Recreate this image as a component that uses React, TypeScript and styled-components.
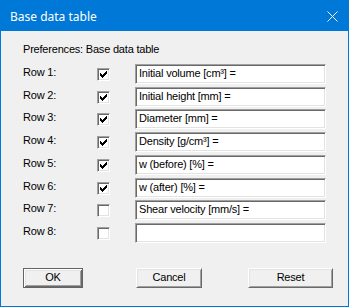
import React from 'react';
import styled, { createGlobalStyle } from 'styled-components';

const GlobalStyle = createGlobalStyle`
  html, body {
    margin: 0;
    padding: 0;
    background: #f0f0f0;
  }
`;

const Window = styled.div`
  box-sizing: border-box;
  width: 349px;
  height: 307px;
  border: 1px solid #0078d7;
  background: #f0f0f0;
  display: flex;
  flex-direction: column;
  font-family: "Liberation Sans", Arial, sans-serif;
  font-size: 11px;
  letter-spacing: -0.2px;
  color: #000;
`;

const TitleBar = styled.div`
  height: 30px;
  background: #0078d7;
  display: flex;
  align-items: center;
  padding-left: 9px;
  padding-right: 10px;
`;

const Title = styled.span`
  font-family: "Noto Sans", sans-serif;
  font-size: 12px;
  letter-spacing: 0;
  color: #fff;
  flex: 1;
  margin-top: 1px;
`;

const CloseIcon = styled.svg`
  display: block;
  width: 11px;
  height: 11px;
  margin-top: 1px;
`;

const Content = styled.div`
  padding: 12px 0 0 22px;
`;

const Heading = styled.div`
  line-height: 13px;
`;

const Rows = styled.div`
  margin-top: 8px;
  display: grid;
  grid-template-columns: 74px 38px 191px;
  grid-auto-rows: 20px;
  row-gap: 2.714px;
`;

const Label = styled.div`
  line-height: 13px;
  padding-top: 2px;
`;

const CheckBox = styled.div`
  box-sizing: border-box;
  width: 13px;
  height: 13px;
  margin-top: 4px;
  background: #fff;
  border: 1px solid;
  border-color: #a0a0a0 #fff #fff #a0a0a0;
  box-shadow: inset 1px 1px #696969, inset -1px -1px #e3e3e3;
  position: relative;
`;

const Tick = styled.svg`
  position: absolute;
  left: 2px;
  top: 2px;
  width: 7px;
  height: 7px;
`;

const Field = styled.div`
  box-sizing: border-box;
  height: 20px;
  background: #fff;
  border: 1px solid;
  border-color: #a0a0a0 #fff #fff #a0a0a0;
  box-shadow: inset 1px 1px #696969, inset -1px -1px #e3e3e3;
  padding: 2px 0 0 3px;
  line-height: 13px;
  white-space: nowrap;
  overflow: hidden;
`;

const ButtonRow = styled.div`
  display: flex;
  margin-top: 25px;
`;

const Button = styled.div<{ $width: number; $offset: number; $default?: boolean }>`
  box-sizing: border-box;
  width: ${(p) => p.$width}px;
  height: 20px;
  margin-left: ${(p) => p.$offset}px;
  display: flex;
  align-items: center;
  justify-content: center;
  line-height: 13px;
  background: #f0f0f0;
  border: 1px solid;
  border-color: ${(p) => (p.$default ? '#646464' : '#fff #696969 #696969 #fff')};
  box-shadow: ${(p) =>
    p.$default
      ? 'inset 1px 1px #fff, inset -1px -1px #696969, inset 2px 2px #e3e3e3, inset -2px -2px #a0a0a0'
      : 'inset 1px 1px #e3e3e3, inset -1px -1px #a0a0a0'};
`;

const rows = [
  { checked: true, text: 'Initial volume [cm³] =' },
  { checked: true, text: 'Initial height [mm] =' },
  { checked: true, text: 'Diameter [mm] =' },
  { checked: true, text: 'Density [g/cm³] =' },
  { checked: true, text: 'w (before) [%] =' },
  { checked: true, text: 'w (after) [%] =' },
  { checked: false, text: 'Shear velocity [mm/s] =' },
  { checked: false, text: '' },
];

// classic 7x7 check mark, one rect per pixel run
const tickRuns: [number, number, number][] = [
  [6, 0, 1],
  [5, 1, 2],
  [0, 2, 1], [4, 2, 3],
  [0, 3, 2], [3, 3, 3],
  [0, 4, 5],
  [1, 5, 3],
  [2, 6, 1],
];

const TickMark = () => (
  <Tick viewBox="0 0 7 7" shapeRendering="crispEdges">
    {tickRuns.map(([x, y, w], i) => (
      <rect key={i} x={x} y={y} width={w} height={1} fill="#000" />
    ))}
  </Tick>
);

const App: React.FunctionComponent = () => (
  <>
    <GlobalStyle />
    <Window>
      <TitleBar>
        <Title>Base data table</Title>
        <CloseIcon viewBox="0 0 11 11">
          <path d="M0.5 0.5 L10.5 10.5 M10.5 0.5 L0.5 10.5" stroke="#fff" strokeWidth="1" />
        </CloseIcon>
      </TitleBar>
      <Content>
        <Heading>Preferences: Base data table</Heading>
        <Rows>
          {rows.map((row, i) => (
            <React.Fragment key={i}>
              <Label>Row {i + 1}:</Label>
              <div>
                <CheckBox>{row.checked && <TickMark />}</CheckBox>
              </div>
              <Field>{row.text}</Field>
            </React.Fragment>
          ))}
        </Rows>
        <ButtonRow>
          <Button $width={60} $offset={0} $default>OK</Button>
          <Button $width={66} $offset={53}>Cancel</Button>
          <Button $width={85} $offset={46}>Reset</Button>
        </ButtonRow>
      </Content>
    </Window>
  </>
);

export default App;
